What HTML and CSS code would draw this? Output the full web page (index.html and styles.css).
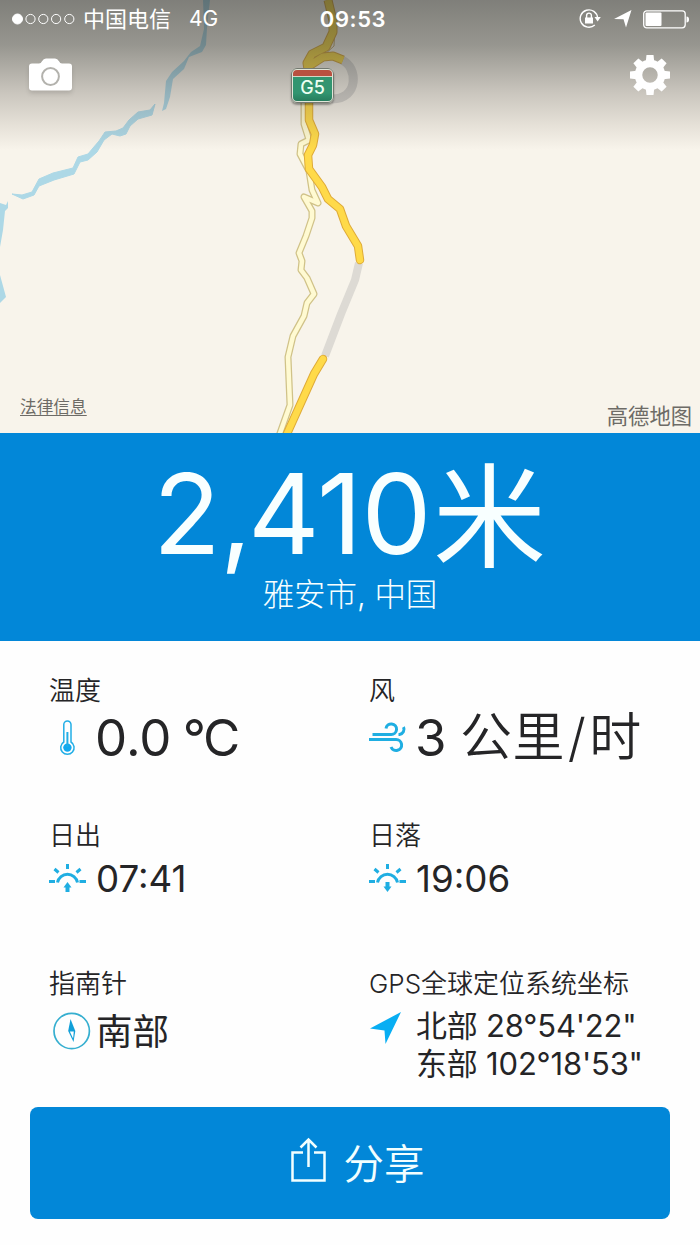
FILE: index.html
```html
<!DOCTYPE html>
<html lang="zh-CN">
<head>
<meta charset="utf-8">
<title>海拔</title>
<link rel="stylesheet" href="styles.css">
</head>
<body>
<main class="app">
  <section class="map">
    <svg class="map-canvas" viewBox="0 0 700 433" width="700" height="433" aria-hidden="true">
      <g fill="#add8e6">
        <path d="M203 0L204 29L200 46L191 52L184 61L172 72L166 81L164 103L162 111L166 109L170 97L173 79L184 69L189 57L202 52L206 45L207 28L210 0Z"/>
        <path d="M155 104L150 110L138 112L129 120L123 128L116 131L105 132L99 141L93 148L88 154L78 157L73 168L53 173L39 179L32 192L22 195L12 194L23 199L34 195L39 186L54 180L74 174L80 162L88 160L97 152L104 140L112 134L120 136L126 134L130 126L138 119L152 115Z" stroke="#add8e6" stroke-width="1"/>
        <path d="M0 203L6 205L8 201L8 208L5 211L3 230L0 247Z"/>
        <path d="M0 275L6 297L0 303Z"/>
      </g>
      <g fill="none" stroke-linejoin="round">
        <path d="M342 60C358 67 359 99 332 99" stroke="#d6d4cf" stroke-width="9"/>
        <path d="M359 263L355 280L341 314L325 356" stroke="#dddad4" stroke-width="8"/>
        <path d="M335 25L334 46L322 57" stroke="#c4ab72" stroke-width="1"/>
        <path d="M304 100L304 124L309 140L301 144L300 154L309 171L312 190L318 203L304 197L312 211L312 218L306 236L299 253L302 261L301 270L307 278L314 294L307 303L304 316L293 336L288 357L290 405L279 436" stroke="#d0c288" stroke-width="7"/>
        <path d="M304 100L304 124L309 140L301 144L300 154L309 171L312 190L318 203L304 197L312 211L312 218L306 236L299 253L302 261L301 270L307 278L314 294L307 303L304 316L293 336L288 357L290 405L279 436" stroke="#fffad2" stroke-width="4.500"/>
        <path d="M328 0L333 21L333 32L326 47L312 54L307 63L309 76M309 66L323 57L333 56L343 60" stroke="#d7a63c" stroke-width="9"/>
        <path d="M328 0L333 21L333 32L326 47L312 54L307 63L309 76M309 66L323 57L333 56L343 60" stroke="#f8d846" stroke-width="7"/>
        <g stroke-linecap="round">
          <path d="M309 98L309 120L315 134L313 145L308 155L309 169L322 187L328 199L340 209L346 226L358 246L360 260M323 359L314 374L286 436" stroke="#dfab38" stroke-width="8.500"/>
          <path d="M309 98L309 120L315 134L313 145L308 155L309 169L322 187L328 199L340 209L346 226L358 246L360 260M323 359L314 374L286 436" stroke="#ffda49" stroke-width="6.500"/>
        </g>
      </g>
    </svg>
    <div class="shade"></div>
    <div class="shield">G5</div>
    <div class="overlay">
      <header class="status">
        <div class="carrier">
          <svg width="64" height="12" viewBox="0 0 64 12" fill="none" stroke="#fff"><circle cx="5.500" cy="6" r="5" fill="#fff"/><circle cx="18.500" cy="6" r="4.600"/><circle cx="31.300" cy="6" r="4.600"/><circle cx="44.100" cy="6" r="4.600"/><circle cx="57.300" cy="6" r="4.600"/></svg>
          <span class="operator">中国电信</span><span class="network">4G</span>
        </div>
        <time class="clock">09:53</time>
        <div class="indicators">
          <svg class="lock" width="22" height="20" viewBox="0 0 22 20" fill="none" stroke="#fff" stroke-width="1.400"><path d="M15.800 16A8.700 8.700 0 1 1 18.600 9"/><path d="M15.500 8h6.300l-3.200 4.500z" fill="#fff" stroke="none"/><rect x="6" y="8.500" width="8" height="6" fill="#fff" stroke="none"/><path d="M7.600 9V6.500a2.400 2.400 0 0 1 4.800 0V9"/></svg>
          <svg width="18" height="18" viewBox="0 0 18 18" fill="#fff"><path d="M17.500 0L0 9l9.500 .2L12 17.500z"/></svg>
          <svg width="47" height="19" viewBox="0 0 47 19"><rect x=".7" y=".8" width="41.500" height="17" rx="3" fill="none" stroke="#fff" stroke-width="1.300"/><rect x="2.500" y="2.500" width="16" height="13.500" rx="1" fill="#fff"/><path d="M43.500 6.500q2.500 0 2.500 3t-2.500 3z" fill="#fff"/></svg>
        </div>
      </header>
      <nav class="tools">
        <svg class="camera" width="43" height="35" viewBox="0 0 43 35"><path d="M3 5.500h7q2 0 3-2.200Q14.500 .5 17 .5h9q2.500 0 4 2.800 1 2.200 3 2.200h7q3 0 3 3v21q0 3-3 3H3q-3 0-3-3v-21q0-3 3-3z" fill="#fff"/><circle cx="21.500" cy="18.500" r="8.400" fill="none" stroke="#b3b2ad" stroke-width="2"/></svg>
        <svg class="gear" width="40" height="40" viewBox="-20 -20 40 40">
          <g fill="#fff"><path d="M-3.500-20h7l1 9h-9z"/><path d="M-3.500-20h7l1 9h-9z" transform="rotate(45)"/><path d="M-3.500-20h7l1 9h-9z" transform="rotate(90)"/><path d="M-3.500-20h7l1 9h-9z" transform="rotate(135)"/><path d="M-3.500-20h7l1 9h-9z" transform="rotate(180)"/><path d="M-3.500-20h7l1 9h-9z" transform="rotate(225)"/><path d="M-3.500-20h7l1 9h-9z" transform="rotate(270)"/><path d="M-3.500-20h7l1 9h-9z" transform="rotate(315)"/></g>
          <circle r="11.500" fill="none" stroke="#fff" stroke-width="7.500"/>
        </svg>
      </nav>
      <footer class="credits"><a class="legal">法律信息</a><span class="brand">高德地图</span></footer>
    </div>
  </section>

  <section class="hero">
    <h1 class="altitude"><span class="number">2<span class="comma">,</span>410</span><span class="unit">米</span></h1>
    <p class="place">雅安市, 中国</p>
  </section>

  <section class="grid">
    <article class="cell">
      <h2 class="label">温度</h2>
      <div class="value large">
        <svg class="icon" width="47" height="38" viewBox="0 0 47 38" fill="none" stroke="#22aee6" stroke-width="1.500"><path d="M14.800 23V5.500a3.600 3.600 0 0 1 7.200 0V23a6.700 6.700 0 1 1-7.200 0z"/><circle cx="18.400" cy="28.600" r="4.200" fill="#12a9ef" stroke="none"/><path d="M18.400 13v15" stroke-width="2"/></svg>
        <span class="temperature">0.0 <span class="degree">°</span>C</span>
      </div>
    </article>
    <article class="cell">
      <h2 class="label">风</h2>
      <div class="value large">
        <svg class="icon" width="47" height="38" viewBox="0 0 47 38" fill="none" stroke="#1faee2" stroke-width="3"><path d="M3.500 15.500H22a5.300 5.300 0 1 0-5-6M0 20.500h27a5.500 5.500 0 1 1-5 7.500M29.500 15.500h1a5.300 5.300 0 0 0 4-7.500"/></svg>
        <span class="wind">3</span><span class="wind-unit">公里<span class="slash">/</span>时</span>
      </div>
    </article>
    <article class="cell">
      <h2 class="label">日出</h2>
      <div class="value medium">
        <svg class="icon" width="47" height="38" viewBox="0 0 47 38" fill="none" stroke="#1faee2" stroke-width="3"><path d="M0 21.500h6M30.500 21.500h6.500M5.500 9l4 3.500M31.500 9l-4 3.500M18.500 4v5"/><path d="M8.500 22.500a10.200 10.200 0 0 1 20 0"/><path d="M18.500 32v-6" stroke-width="4"/><path d="M14.500 27.500l4-5.500 4 5.500z" fill="#1faee2" stroke="none"/></svg>
        <span>07:41</span>
      </div>
    </article>
    <article class="cell">
      <h2 class="label">日落</h2>
      <div class="value medium">
        <svg class="icon" width="47" height="38" viewBox="0 0 47 38" fill="none" stroke="#1faee2" stroke-width="3"><path d="M0 21.500h6M30.500 21.500h6.500M5.500 9l4 3.500M31.500 9l-4 3.500M18.500 4v5"/><path d="M8.500 22.500a10.200 10.200 0 0 1 20 0"/><path d="M18.500 22v5" stroke-width="4"/><path d="M14.500 26.500l4 5.500 4-5.500z" fill="#1faee2" stroke="none"/></svg>
        <span>19:06</span>
      </div>
    </article>
    <article class="cell">
      <h2 class="label">指南针</h2>
      <div class="value compass">
        <svg class="icon" width="47" height="38" viewBox="0 0 47 38"><circle cx="22.700" cy="19" r="17.700" fill="none" stroke="#36afd0" stroke-width="1.700"/><path d="M21.500 7l4.800 12-1.800 11-5.300-11z" fill="#109fd8"/><path d="M20.800 19.500h4l-.7 7z" fill="#fff"/></svg>
        <span>南部</span>
      </div>
    </article>
    <article class="cell">
      <h2 class="label">GPS全球定位系统坐标</h2>
      <div class="value gps">
        <svg class="icon" width="47" height="38" viewBox="0 0 47 38"><path d="M32 5L1 21.500l14.500 2L16.500 37z" fill="#08aef3"/></svg>
        <div class="coords"><div>北部 28°54'22"</div><div>东部 102°18'53"</div></div>
      </div>
    </article>
  </section>

  <button class="share" type="button">
    <svg width="36" height="46" viewBox="0 0 36 46" fill="none" stroke="#f2ffff" stroke-width="2.500"><path d="M13 15.500H2.500v28h32v-28H24M18.500 30V3M10.500 10.500L18.500 2.500l8 8"/></svg>
    <span>分享</span>
  </button>
</main>
</body>
</html>
```
FILE: styles.css
```css
* { box-sizing: border-box; }
body {
  margin: 0;
  background: #fefefe;
  color: #252527;
  font-family: Inter, "Noto Sans CJK SC", sans-serif;
}
h1, h2, p { margin: 0; font-weight: 400; }
svg { display: block; flex: none; }
.app { width: 700px; height: 1245px; overflow: hidden; }

.map { position: relative; height: 433px; background: #f8f4eb; overflow: hidden; }
.map-canvas { position: absolute; inset: 0; }
.shade {
  position: absolute;
  inset: 0 0 auto;
  height: 150px;
  background: linear-gradient(rgba(40, 42, 40, .58), rgba(50, 52, 48, .49) 30%, rgba(70, 65, 60, .26) 62%, rgba(90, 80, 70, .12) 83%, rgba(90, 80, 70, 0));
}
.shield {
  position: absolute;
  left: 291px;
  top: 68px;
  width: 43px;
  height: 35px;
  border: 2px solid #e0e5d8;
  outline: 1px solid #737970;
  outline-offset: -1px;
  border-radius: 6px;
  background: linear-gradient(#b95040 0 6px, #d5d5c4 6px 7px, #329570 7px 23px, #277d5d);
  box-shadow: 0 2px 2px rgba(0, 0, 0, .35);
  color: #edfff2;
  font-size: 18px;
  font-weight: 500;
  line-height: 35px;
  text-align: center;
}
.overlay { position: relative; height: 100%; display: flex; flex-direction: column; }
.status {
  display: grid;
  grid-template-columns: 1fr auto 1fr;
  align-items: center;
  height: 38px;
  padding: 0 10px 0 12px;
  color: #fff;
}
.carrier { display: flex; align-items: center; font-size: 22px; line-height: 30px; }
.operator { margin-left: 7px; }
.network { margin-left: 18px; font-size: 21px; }
.clock { font-size: 22px; font-weight: 600; letter-spacing: .6px; padding-left: 4px; }
.indicators { display: flex; align-items: center; justify-content: flex-end; gap: 11px; }
.lock { margin-right: 2px; }
.tools { display: flex; justify-content: space-between; align-items: center; height: 74px; padding: 0 30px 0 29px; }
.camera { filter: drop-shadow(0 3px 2px rgba(0, 0, 0, .12)); }
.credits { display: flex; justify-content: space-between; align-items: flex-end; margin-top: auto; padding: 0 8px 3px 20px; color: #6d6b66; }
.legal { font-size: 16.700px; line-height: 24px; text-decoration: underline; text-underline-offset: 2px; padding-bottom: 11px; }
.brand { font-size: 21.300px; line-height: 27px; }

.hero { height: 208px; padding-top: 20px; background: #0287d8; color: #f8ffff; text-align: center; }
.altitude { display: flex; justify-content: center; height: 124px; line-height: 122px; padding-right: 1px; }
.number { font-size: 111px; letter-spacing: -.6px; }
.comma { letter-spacing: -4px; }
.unit { margin-top: -6px; margin-left: 2px; font-family: "Noto Sans CJK SC", sans-serif; font-size: 113px; line-height: 124px; }
.place { font-size: 31.500px; line-height: 36px; font-weight: 300; letter-spacing: -.1px; }

.grid {
  display: grid;
  grid-template-columns: 320px 1fr;
  grid-template-rows: 145px 148px 140px;
  padding: 33px 0 0 49px;
}
.label { height: 32px; font-size: 26px; line-height: 34px; white-space: nowrap; font-weight: 350; }
.value { display: flex; align-items: center; white-space: nowrap; }
.large { height: 64px; font-size: 51px; line-height: 60px; }
.temperature { word-spacing: -3px; margin-left: -1px; }
.degree { letter-spacing: -3px; }
.wind { width: 45px; margin-left: -1px; }
.wind-unit { font-size: 52px; font-weight: 350; letter-spacing: .4px; }
.slash { margin: 0 3px; }
.medium { height: 56px; font-size: 36.700px; line-height: 44px; padding-bottom: 1px; }
.compass { height: 64px; font-size: 36.500px; line-height: 48px; }
.compass span { padding-top: 2px; }
.gps { align-items: flex-start; padding-top: 8px; font-size: 31px; letter-spacing: -.2px; }
.coords { line-height: 38px; }

.share {
  display: flex;
  justify-content: center;
  align-items: center;
  gap: 18px;
  width: 640px;
  height: 112px;
  margin: 0 30px;
  padding: 0 0 4px 14px;
  border: 0;
  border-radius: 8px;
  background: #0287d8;
  color: #f2ffff;
  font: 350 40.500px Inter, "Noto Sans CJK SC", sans-serif;
}
.share svg { margin-top: -3px; }
```
